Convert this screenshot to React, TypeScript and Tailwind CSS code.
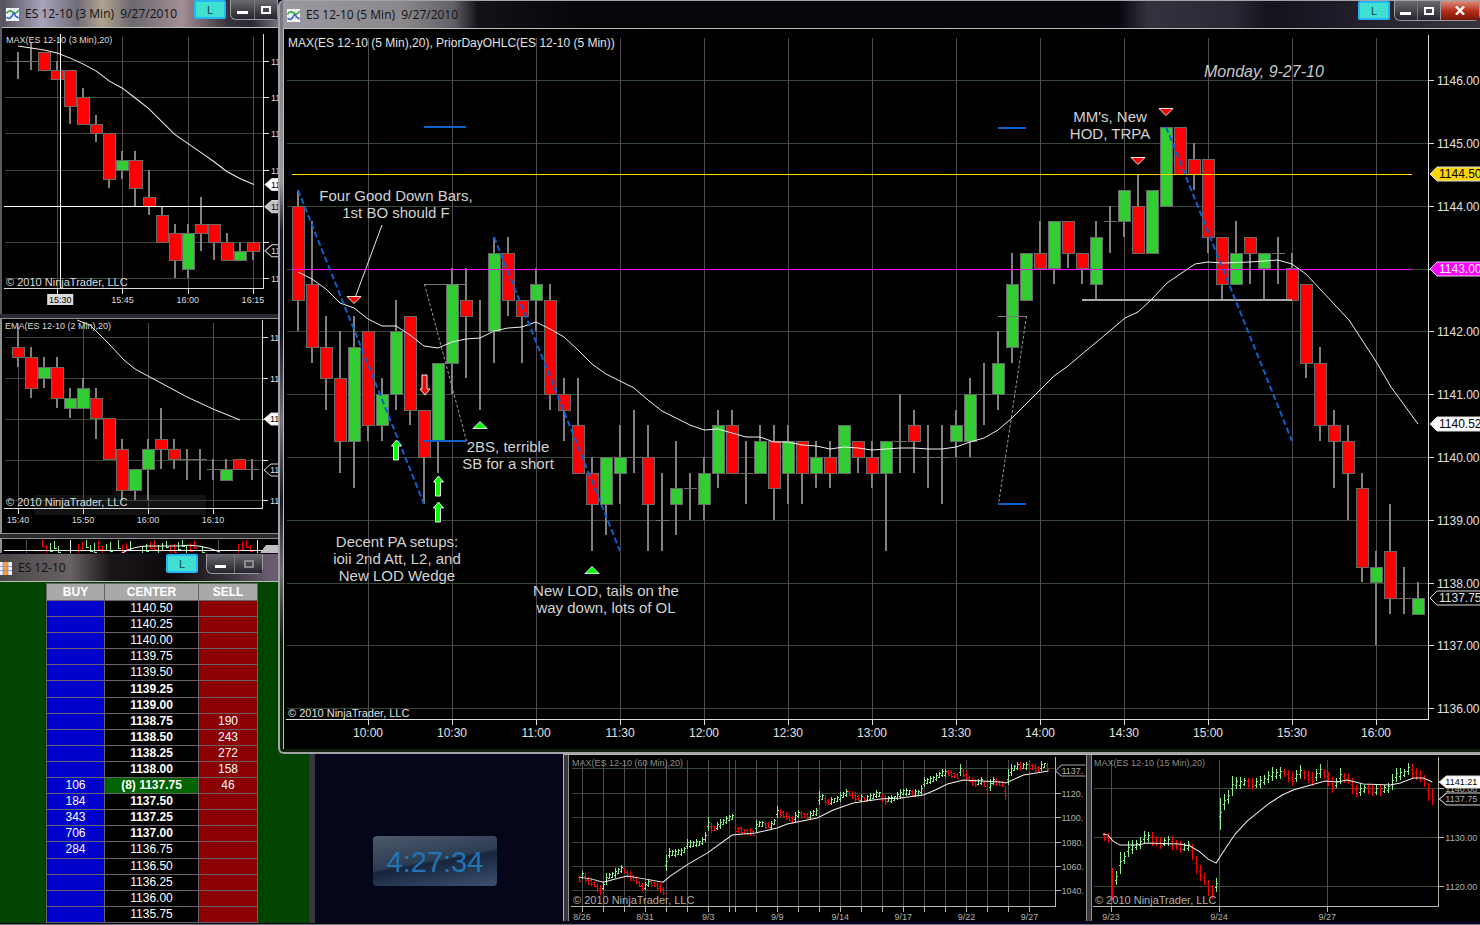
import type { ReactNode } from "react"

type Candle = [high: number, top: number, bottom: number, low: number, kind: "r" | "g" | "d"]
type Point = [number, number]

// 5 min bars in ticks above 1136.00
const FIVE_MIN: Candle[] = [
  [33, 32, 26, 24, "r"], [31, 27, 23, 22, "r"], [25, 23, 21, 19, "r"], [24, 21, 17, 15, "r"],
  [25, 23, 17, 14, "g"], [24, 24, 18, 17, "r"], [21, 20, 18, 17, "g"], [26, 24, 20, 19, "g"],
  [25, 25, 19, 18, "r"], [19, 19, 16, 13, "r"], [22, 22, 17, 15, "g"], [28, 27, 22, 20, "g"],
  [28, 26, 25, 21, "r"], [26, 24, 24, 19, "d"], [30, 29, 24, 22, "g"], [30, 29, 26, 25, "r"],
  [26, 26, 25, 22, "r"], [28, 27, 26, 24, "g"], [27, 26, 20, 19, "r"], [21, 20, 19, 17, "r"],
  [21, 18, 15, 15, "r"], [16, 15, 13, 10, "r"], [16, 16, 13, 11, "g"], [18, 16, 15, 13, "g"],
  [19, 16, 16, 15, "d"], [18, 16, 13, 10, "r"], [15, 12, 12, 10, "d"], [17, 14, 13, 11, "g"],
  [15, 14, 14, 12, "d"], [16, 15, 13, 12, "g"], [19, 18, 15, 14, "g"], [19, 18, 15, 15, "r"],
  [17, 15, 15, 13, "d"], [18, 17, 15, 15, "g"], [18, 17, 14, 12, "r"], [18, 17, 15, 13, "g"],
  [17, 17, 15, 13, "r"], [17, 16, 15, 14, "g"], [17, 16, 15, 14, "r"], [18, 18, 15, 15, "g"],
  [17, 17, 16, 15, "r"], [17, 16, 15, 14, "r"], [17, 17, 15, 10, "g"], [20, 17, 17, 15, "d"],
  [19, 18, 17, 15, "r"], [18, 16, 16, 14, "d"], [18, 16, 16, 13, "d"], [19, 18, 17, 16, "g"],
  [21, 20, 17, 16, "g"], [22, 20, 20, 18, "d"], [24, 22, 20, 19, "g"], [29, 27, 23, 22, "g"],
  [29, 29, 26, 26, "g"], [31, 29, 28, 28, "r"], [31, 31, 28, 27, "g"], [31, 31, 29, 28, "r"],
  [29, 29, 28, 27, "r"], [31, 30, 27, 26, "g"], [32, 31, 31, 29, "d"], [33, 33, 31, 30, "g"],
  [34, 32, 29, 29, "r"], [33, 33, 29, 29, "g"], [37, 37, 32, 32, "g"], [37, 37, 34, 34, "r"],
  [36, 35, 34, 33, "r"], [35, 35, 30, 29, "r"], [30, 30, 27, 26, "r"], [31, 29, 27, 27, "g"],
  [30, 30, 29, 27, "r"], [29, 29, 28, 26, "g"], [30, 29, 29, 27, "d"], [29, 28, 26, 26, "r"],
  [27, 27, 22, 21, "r"], [23, 22, 18, 17, "r"], [19, 18, 17, 14, "r"], [18, 17, 15, 12, "r"],
  [15, 14, 9, 8, "r"], [10, 9, 8, 4, "g"], [13, 10, 7, 6, "r"], [9, 7, 7, 6, "d"],
  [8, 7, 6, 6, "g"],
]

// 3 min bars in ticks above 1137.00
const THREE_MIN: Candle[] = [
  [25, 24, 24, 22, "d"], [26, 24, 24, 23, "d"], [25, 25, 23, 23, "r"], [24, 23, 22, 22, "r"],
  [23, 23, 19, 17, "r"], [21, 20, 17, 17, "r"], [18, 17, 16, 15, "r"], [16, 16, 11, 10, "r"],
  [14, 13, 12, 11, "g"], [14, 13, 10, 8, "r"], [12, 9, 8, 7, "r"], [8, 7, 4, 4, "r"],
  [6, 5, 2, 0, "r"], [6, 5, 1, 0, "g"], [9, 6, 5, 3, "r"], [6, 6, 4, 2, "r"],
  [5, 4, 2, 2, "r"], [4, 3, 2, 2, "g"], [4, 4, 3, 2, "r"],
]

// 2 min bars in ticks above 1137.00
const TWO_MIN: Candle[] = [
  [17, 15, 14, 13, "r"], [15, 14, 11, 10, "r"], [14, 13, 12, 11, "g"], [14, 13, 10, 9, "r"],
  [11, 10, 9, 8, "g"], [12, 11, 9, 9, "g"], [11, 10, 8, 6, "r"], [8, 8, 4, 4, "r"],
  [6, 5, 1, 0, "r"], [3, 3, 1, 0, "g"], [6, 5, 3, 0, "g"], [9, 6, 5, 3, "r"],
  [6, 5, 4, 3, "r"], [5, 4, 4, 2, "d"], [5, 4, 4, 2, "d"], [4, 3, 3, 2, "d"],
  [4, 3, 2, 2, "g"], [4, 4, 3, 3, "r"], [4, 3, 3, 2, "d"],
]

const HOURLY: Point[] = [
  [579, 880], [582, 876], [588, 882], [593, 883], [599, 892], [603, 887], [607, 877], [613, 876],
  [622, 869], [627, 875], [635, 880], [643, 889], [648, 884], [655, 885], [663, 892], [666, 864],
  [668, 854], [683, 853], [687, 845], [700, 844], [706, 837], [708, 825], [712, 830], [727, 820],
  [732, 818], [735, 830], [753, 834], [757, 825], [773, 826], [777, 813], [787, 817], [792, 821],
  [798, 815], [807, 817], [817, 812], [819, 799], [823, 798], [827, 803], [837, 800], [847, 793],
  [853, 797], [863, 800], [873, 797], [878, 793], [883, 801], [892, 800], [903, 793], [920, 794],
  [924, 783], [935, 779], [943, 773], [957, 777], [960, 771], [967, 778], [973, 784], [983, 782],
  [987, 792], [992, 782], [1002, 785], [1005, 794], [1009, 772], [1017, 767], [1028, 767],
  [1038, 770], [1043, 765], [1048, 769],
]

const QUARTER: Point[] = [
  [1104, 838], [1108, 839], [1112, 885], [1116, 879], [1120, 864], [1124, 859], [1128, 850],
  [1134, 847], [1140, 844], [1144, 838], [1148, 838], [1160, 844], [1168, 842], [1180, 848],
  [1190, 847], [1196, 866], [1200, 874], [1204, 880], [1207, 888], [1212, 893], [1216, 886],
  [1220, 815], [1224, 803], [1228, 798], [1232, 787], [1236, 784], [1244, 783], [1252, 785],
  [1256, 784], [1264, 781], [1272, 775], [1284, 774], [1292, 780], [1300, 773], [1308, 778],
  [1312, 780], [1320, 772], [1327, 778], [1331, 786], [1336, 784], [1340, 777], [1348, 780],
  [1355, 792], [1364, 790], [1380, 791], [1388, 789], [1396, 776], [1404, 774], [1409, 769],
  [1416, 775], [1423, 779], [1427, 792], [1432, 798],
]

const LADDER = [
  { price: "1140.50" }, { price: "1140.25" }, { price: "1140.00" }, { price: "1139.75" },
  { price: "1139.50" },
  { price: "1139.25", bold: true }, { price: "1139.00", bold: true },
  { price: "1138.75", bold: true, sell: "190" }, { price: "1138.50", bold: true, sell: "243" },
  { price: "1138.25", bold: true, sell: "272" }, { price: "1138.00", bold: true, sell: "158" },
  { price: "(8) 1137.75", bold: true, last: true, buy: "106", sell: "46" },
  { price: "1137.50", bold: true, buy: "184" }, { price: "1137.25", bold: true, buy: "343" },
  { price: "1137.00", bold: true, buy: "706" }, { price: "1136.75", buy: "284" },
  { price: "1136.50" }, { price: "1136.25" }, { price: "1136.00" }, { price: "1135.75" },
] as { price: string; bold?: boolean; last?: boolean; buy?: string; sell?: string }[]

function Grid({ xs, ys, x1, x2, y1, y2 }: { xs: number[]; ys: number[]; x1: number; x2: number; y1: number; y2: number }) {
  return (
    <g shapeRendering="crispEdges">
      {ys.map((y) => <line key={y} x1={x1} x2={x2} y1={y + 0.5} y2={y + 0.5} stroke="#374837" />)}
      {xs.map((x) => <line key={x} x1={x + 0.5} x2={x + 0.5} y1={y1} y2={y2} stroke="#524852" />)}
    </g>
  )
}

function Axes({ xs, ys, left, right, top, bottom, tick = 6, color = "#dcdcdc" }: { xs: number[]; ys: number[]; left: number; right: number; top: number; bottom: number; tick?: number; color?: string }) {
  return (
    <g shapeRendering="crispEdges" stroke={color}>
      <line x1={left} x2={right + 1} y1={bottom + 0.5} y2={bottom + 0.5} />
      <line x1={right + 0.5} x2={right + 0.5} y1={top} y2={bottom} />
      {ys.map((y) => <line key={y} x1={right} x2={right + tick} y1={y + 0.5} y2={y + 0.5} />)}
      {xs.map((x) => <line key={x} x1={x + 0.5} x2={x + 0.5} y1={bottom} y2={bottom + tick} />)}
    </g>
  )
}

function Candles({ data, x0, step, base, tick }: { data: Candle[]; x0: number; step: number; base: number; tick: number }) {
  const y = (t: number) => Math.round(base - t * tick)
  return (
    <g shapeRendering="crispEdges">
      {data.map(([high, top, bottom, low, kind], i) => {
        const x = x0 + i * step
        return (
          <g key={i}>
            <rect x={x - 1} y={y(high)} width={2} height={y(low) - y(high)} fill="#808080" />
            {kind === "d" ? (
              <line x1={x - 6} x2={x + 7} y1={y(top) + 0.5} y2={y(top) + 0.5} stroke="#6e6e6e" />
            ) : (
              <rect x={x - 5.5} y={y(top) + 0.5} width={12} height={y(bottom) - y(top)} fill={kind === "r" ? "#ff0000" : "#32cd32"} stroke="#696969" />
            )}
          </g>
        )
      })}
    </g>
  )
}

// open/high/low/close sticks walked along a price path
function Sticks({ path, step, size }: { path: Point[]; step: number; size: number }) {
  const start = path[0][0]
  const count = Math.floor((path[path.length - 1][0] - start) / step) + 1
  const at = (x: number) => {
    const i = Math.max(1, path.findIndex((p) => p[0] >= x))
    const [ax, ay] = path[i - 1]
    const [bx, by] = path[i]
    return ay + ((by - ay) * (x - ax)) / (bx - ax)
  }
  return (
    <g shapeRendering="crispEdges">
      {Array.from({ length: count }, (_, i) => {
        const x = start + i * step
        const mid = Math.round(at(x))
        const move = i ? mid - Math.round(at(x - step)) : 0
        const up = move < 0 || (move === 0 && i % 3 !== 0)
        const half = Math.min(size * 2, Math.round(size / 2 + ((i * 7) % 5) / 2 + Math.abs(move) / 3))
        const open = up ? mid + 2 : mid - 2
        const close = up ? mid - 2 : mid + 2
        return (
          <path key={i} d={`M${x + 0.5} ${mid - half}V${mid + half}M${x - 1} ${open + 0.5}h2M${x} ${close + 0.5}h2`} stroke={up ? "#90ee90" : "#ff0000"} fill="none" />
        )
      })}
    </g>
  )
}

function Average({ points, color = "#f0f0f0" }: { points: string; color?: string }) {
  return <polyline points={points} fill="none" stroke={color} />
}

function PriceTag({ x, y, label, fill = "#000", stroke = "#dcdcdc", color = "#000", size = 12 }: { x: number; y: number; label: string; fill?: string; stroke?: string; color?: string; size?: number }) {
  const h = size > 10 ? 7 : 6
  return (
    <g>
      <path d={`M${x} ${y}l7 ${-h}h60v${h * 2}h-60z`} fill={fill} stroke={stroke} />
      <text x={x + (size > 10 ? 9 : 6)} y={y + Math.round(size / 3)} fontSize={size} fill={color}>{label}</text>
    </g>
  )
}

function Note({ x, y, lines }: { x: number; y: number; lines: string[] }) {
  return (
    <text fontSize={15} fill="#d3d3d3" textAnchor="middle">
      {lines.map((line, i) => <tspan key={line} x={x} y={y + i * 17}>{line}</tspan>)}
    </text>
  )
}

function Arrow({ x, y, down }: { x: number; y: number; down?: boolean }) {
  const d = down
    ? `M${x - 2} ${y}h5v14h3l-5 6l-5 -6h2z`
    : `M${x + 0.5} ${y}l5 6h-3v14h-5v-14h-2z`
  return <path d={d} fill={down ? "#ff0000" : "#00ff00"} stroke="#f0f0f0" />
}

function Marker({ x, y, down }: { x: number; y: number; down?: boolean }) {
  return down ? (
    <path d={`M${x - 7} ${y - 3.5}h14l-7 7z`} fill="#ff0000" stroke="#e8e8e8" />
  ) : (
    <path d={`M${x - 7} ${y + 3.5}h14l-7 -7z`} fill="#00ff00" stroke="#e8e8e8" />
  )
}

function ChartIcon() {
  return (
    <svg viewBox="0 0 13 13" className="size-[13px] shrink-0">
      <rect width="13" height="13" fill="#f4f6f8" />
      <path d="M0 4.5h13M0 8.5h13M4.5 0v13M8.5 0v13" stroke="#cfd8dc" strokeWidth="0.6" />
      <path d="M0.5 5.5q2-3.5 4.5-2.5t3.5 2.5q2 0 4-3.5" stroke="#2e9e3a" strokeWidth="1.5" fill="none" />
      <path d="M0.5 9.5l2.5 1q3-1 4.5-5.5M8 5.5l2 3 2.500 1.500" stroke="#2d62c8" strokeWidth="1.5" fill="none" />
    </svg>
  )
}

function LadderIcon() {
  return (
    <svg viewBox="0 0 12 13" className="h-[13px] w-3 shrink-0">
      <rect width="12" height="13" fill="#eef" />
      <rect x="3" width="5" height="13" fill="#f7a032" />
      <path d="M0 4.5h12M0 8.5h12M3 0v13M8 0v13" stroke="#8a8fb0" strokeWidth="0.8" />
    </svg>
  )
}

function LinkButton() {
  return (
    <button className="h-[19px] w-8 shrink-0 rounded-xs border-2 border-[#25b4f4] bg-[#40e0d0] text-center text-[11px] leading-3 text-[#10404c]">
      L
    </button>
  )
}

function WindowButtons({ close, dim }: { close?: boolean; dim?: boolean }) {
  return (
    <div className="flex h-5 shrink-0 rounded-b-md border border-t-0 border-[#9a9aa2]">
      <button aria-label="Minimize" className="flex w-7 items-end justify-center rounded-bl-md border-r border-[#77777f] bg-linear-to-b from-[#6a6a70] to-[#25252b] pb-[5px]">
        <span className="h-[3px] w-[11px] bg-white" />
      </button>
      <button aria-label="Maximize" className="flex w-[27px] items-center justify-center bg-linear-to-b from-[#6a6a70] to-[#25252b]">
        <span className={dim ? "h-2 w-[10px] border-2 border-[#8c8c8c]" : "h-2 w-[10px] border-2 border-white"} />
      </button>
      {close && (
        <button aria-label="Close" className="flex w-12 items-center justify-center border-l border-[#9a9aa2] bg-linear-to-b from-[#d88a7c] via-[#b8301c] to-[#7a1408] text-white">
          <svg viewBox="0 0 10 9" className="h-[9px] w-[10px]">
            <path d="M1 0.5l8 8M9 0.5l-8 8" stroke="#fff" strokeWidth="2.4" />
          </svg>
        </button>
      )}
    </div>
  )
}

function Chart({ box, label, className, children }: { box: string; label: string; className?: string; children: ReactNode }) {
  return (
    <svg viewBox={box} role="img" aria-label={label} preserveAspectRatio="xMinYMin meet" fontFamily="'Liberation Sans', Arial, sans-serif" className={`block w-full bg-black ${className ?? ""}`}>
      {children}
    </svg>
  )
}

function FiveMinuteChart() {
  const xs = Array.from({ length: 13 }, (_, i) => 368 + i * 84)
  const ys = [80, 143, 206, 269, 331, 394, 457, 520, 583, 645, 708]
  const times = ["10:00", "10:30", "11:00", "11:30", "12:00", "12:30", "13:00", "13:30", "14:00", "14:30", "15:00", "15:30", "16:00"]
  return (
    <Chart box="284 29 1196 720" label="ES 12-10 5 minute chart">
      <Grid xs={xs} ys={ys} x1={287} x2={1428} y1={38} y2={719} />
      <Axes xs={xs} ys={ys} left={286} right={1428} top={35} bottom={719} />
      <Candles data={FIVE_MIN} x0={298} step={14} base={708} tick={15.7} />
      <g shapeRendering="crispEdges">
        <line x1={292} x2={1412} y1={174.5} y2={174.5} stroke="#ffd700" />
        <line x1={292} x2={1412} y1={269.5} y2={269.5} stroke="#ff00ff" />
        <line x1={1082} x2={1292} y1={300} y2={300} stroke="#a9a9a9" strokeWidth={2} />
      </g>
      <Average points="298,272 312,279 326,289 340,303 354,308 368,319 382,326 396,326 410,335 424,346 438,348 452,342 466,339 480,338 494,331 508,328 522,327 536,322 550,329 564,337 578,350 592,364 606,374 620,381 634,388 648,400 662,411 676,418 690,425 704,430 718,429 732,433 746,437 760,437 774,442 788,442 802,445 816,446 830,449 844,447 858,448 872,450 886,449 900,448 914,448 928,449 942,449 956,447 970,442 984,438 998,430 1012,418 1026,404 1040,390 1054,376 1068,366 1082,354 1099,340 1125,318 1138,312 1152,299 1167,283 1195,264 1208,262 1223,263 1250,262 1278,260 1292,264 1306,274 1349,320 1377,363 1391,387 1418,424" />
      <g stroke="#0a60cd" strokeWidth={2} fill="none">
        <path d="M298 190L424 504M494 237L620 551M1166 127L1292 441" strokeDasharray="6 3" />
        <path d="M424 127h42M424 441h42M998 128h28M998 504h28" />
      </g>
      <g stroke="#9a9a9a" fill="none">
        <path d="M424 284.5h42M998 316.5h28" stroke="#777" />
        <path d="M424.5 284L466.5 441M1026.5 316L998.5 504" strokeDasharray="3 2" />
        <path d="M382 225L355 298" stroke="#e8e8e8" />
      </g>
      <Marker x={354} y={300} down />
      <Marker x={1138} y={161} down />
      <Marker x={1166} y={112} down />
      <Marker x={480} y={425} />
      <Marker x={592} y={570} />
      <Arrow x={396} y={440} />
      <Arrow x={438} y={476} />
      <Arrow x={438} y={502} />
      <Arrow x={424} y={375} down />
      <Note x={396} y={201} lines={["Four Good Down Bars,", "1st BO should F"]} />
      <Note x={508} y={452} lines={["2BS, terrible", "SB for a short"]} />
      <Note x={397} y={547} lines={["Decent PA setups:", "ioii 2nd Att, L2, and", "New LOD Wedge"]} />
      <Note x={606} y={596} lines={["New LOD, tails on the", "way down, lots of OL"]} />
      <Note x={1110} y={122} lines={["MM's, New", "HOD, TRPA"]} />
      <text x={1204} y={77} fontSize={16} fontStyle="italic" fill="#c8c8c8">Monday, 9-27-10</text>
      <g fontSize={12} fill="#e0e0e0">
        <text x={288} y={47}>MAX(ES 12-10 (5 Min),20), PriorDayOHLC(ES 12-10 (5 Min))</text>
        <text x={288} y={717} fontSize={11}>© 2010 NinjaTrader, LLC</text>
        {times.map((t, i) => <text key={t} x={xs[i]} y={737} textAnchor="middle">{t}</text>)}
        {ys.map((y, i) => <text key={y} x={1437} y={y + 5}>{`${1146 - i}.00`}</text>)}
      </g>
      <PriceTag x={1430} y={174} label="1144.50" fill="#ffd700" />
      <PriceTag x={1430} y={269} label="1143.00" fill="#ff00ff" color="#fff" />
      <PriceTag x={1430} y={424} label="1140.52" fill="#fff" />
      <PriceTag x={1430} y={598} label="1137.75" color="#e0e0e0" />
    </Chart>
  )
}

function ThreeMinuteChart() {
  const xs = [58, 123, 188, 253]
  const ys = [62, 98, 134, 170, 242, 278]
  return (
    <Chart box="3 29 275 285" label="ES 12-10 3 minute chart">
      <Grid xs={xs} ys={ys} x1={6} x2={263} y1={38} y2={288} />
      <Axes xs={xs} ys={ys} left={5} right={263} top={35} bottom={288} />
      <Candles data={THREE_MIN} x0={19} step={13} base={278} tick={9} />
      <Average points="19,47 32,49 45,51 58,54 71,59 84,65 97,72 110,82 123,89 136,99 149,109 162,122 175,135 188,144 201,153 214,162 227,172 240,179 254,185" />
      <path d="M61.5 35V288M5 206.5H264" stroke="#fff" shapeRendering="crispEdges" />
      <g fontSize={9} fill="#dcdcdc">
        <text x={7} y={44}>MAX(ES 12-10 (3 Min),20)</text>
        <text x={7} y={286} fontSize={11}>© 2010 NinjaTrader, LLC</text>
        {ys.filter((y) => y !== 242).map((y) => <text key={y} x={271} y={y + 4}>11</text>)}
        <rect x={48} y={294} width={26} height={11} fill="#dcdcdc" />
        <text x={61} y={303} textAnchor="middle" fill="#000">15:30</text>
        <text x={123} y={303} textAnchor="middle">15:45</text>
        <text x={188} y={303} textAnchor="middle">16:00</text>
        <text x={253} y={303} textAnchor="middle">16:15</text>
      </g>
      <PriceTag x={265} y={185} label="11" fill="#fff" size={9} />
      <PriceTag x={265} y={207} label="11" fill="#c0c0c0" size={9} />
      <PriceTag x={265} y={251} label="11" color="#dcdcdc" size={9} />
    </Chart>
  )
}

function TwoMinuteChart() {
  const xs = [18, 83, 148, 213]
  const ys = [337, 378, 419, 460, 500]
  const times = ["15:40", "15:50", "16:00", "16:10"]
  return (
    <Chart box="2 319 276 214" label="ES 12-10 2 minute chart">
      <rect x={34} y={495} width={172} height={20} fill="#121212" />
      <Grid xs={xs} ys={ys} x1={5} x2={262} y1={323} y2={508} />
      <Axes xs={xs} ys={ys} left={4} right={262} top={320} bottom={508} />
      <Candles data={TWO_MIN} x0={18} step={13} base={500} tick={10.2} />
      <Average points="77,320 90,325 110,345 124,360 135,369 148,376 161,383 187,397 213,409 240,420" />
      <g fontSize={9} fill="#dcdcdc">
        <text x={5} y={329}>EMA(ES 12-10 (2 Min),20)</text>
        <text x={6} y={506} fontSize={11}>© 2010 NinjaTrader, LLC</text>
        {[337, 378, 500].map((y) => <text key={y} x={270} y={y + 4}>11</text>)}
        {times.map((t, i) => <text key={t} x={xs[i]} y={523} textAnchor="middle">{t}</text>)}
      </g>
      <PriceTag x={264} y={419} label="11" fill="#fff" size={9} />
      <PriceTag x={264} y={470} label="11" color="#dcdcdc" size={9} />
    </Chart>
  )
}

function VolumeStrip() {
  const bars = [42, 46, 50, 54, 58, 78, 82, 86, 90, 94, 98, 102, 106, 110, 118, 122, 126, 130, 142, 146, 150, 154, 158, 162, 166, 170, 174, 178, 182, 186, 190, 194, 202, 238, 242, 246, 250]
  return (
    <Chart box="2 539 276 14" label="ES 12-10 overview">
      <g shapeRendering="crispEdges">
        {bars.map((x, i) => (
          <path key={x} d={`M${x + 0.5} ${540 + ((i * 5) % 7)}v${6 + ((i * 3) % 4)}h2`} fill="none" stroke={i % 5 < 2 || i > 32 ? "#ff0000" : "#90ee90"} />
        ))}
        <path d="M26.5 540v13M218.5 540v13" stroke="#555" />
        <path d="M70.5 540v13M257.5 540v13M4 550.5h268" stroke="#f0f0f0" />
      </g>
      <path d="M122 553q12 -7 26 -7h30q20 -3 42 6" fill="none" stroke="#fff" />
      <path d="M260 553l6 -8h14v8z" fill="#c0c0c0" />
    </Chart>
  )
}

function HourChart() {
  const xs = [582, 603, 624, 645, 666, 687, 708, 729, 735, 756, 777, 798, 819, 840, 861, 882, 903, 924, 945, 966, 987, 1008, 1029]
  const ys = [769, 794, 818, 843, 867, 891]
  const dates: [number, string][] = [[582, "8/26"], [645, "8/31"], [708, "9/3"], [777, "9/9"], [840, "9/14"], [903, "9/17"], [966, "9/22"], [1029, "9/27"]]
  return (
    <Chart box="569 756 516 166" label="ES 12-10 60 minute chart">
      <Grid xs={xs} ys={ys} x1={572} x2={1054} y1={761} y2={907} />
      <Axes xs={xs} ys={ys.slice(1)} left={571} right={1054} top={758} bottom={907} color="#b4b8a8" />
      <Sticks path={HOURLY} step={3} size={4} />
      <Average points="579,878 592,880 603,883 627,877 640,879 663,883 670,877 688,865 707,854 732,836 755,834 777,829 787,825 817,819 833,811 853,804 880,800 900,799 923,796 935,791 947,785 963,781 1000,783 1005,784 1023,776 1048,772" />
      <g fontSize={9} fill="#b0b0a8">
        <text x={572} y={767} fill="#8c8c88">MAX(ES 12-10 (60 Min),20)</text>
        <text x={573} y={905} fontSize={11}>© 2010 NinjaTrader, LLC</text>
        {dates.map(([x, d]) => <text key={d} x={x} y={921} textAnchor="middle">{d}</text>)}
        {["1120.", "1100.", "1080.", "1060.", "1040."].map((p, i) => <text key={p} x={1061} y={ys[i + 1] + 4}>{p}</text>)}
      </g>
      <path d="M1055 772l6 -6h24M1055 772l6 5h24" fill="none" stroke="#a8a0a8" />
      <text x={1061} y={775} fontSize={9} fill="#b0b0a8">1137.</text>
    </Chart>
  )
}

function QuarterChart() {
  const xs = [1111, 1219, 1327]
  const ys = [789, 838, 887]
  return (
    <Chart box="1092 756 388 166" label="ES 12-10 15 minute chart">
      <Grid xs={xs} ys={ys} x1={1094} x2={1438} y1={761} y2={907} />
      <Axes xs={xs} ys={ys} left={1093} right={1438} top={758} bottom={907} color="#b4b8a8" />
      <Sticks path={QUARTER} step={4} size={8} />
      <Average points="1103,835 1108,836 1113,842 1120,846 1137,846 1147,844 1180,845 1190,847 1200,853 1208,860 1216,864 1223,853 1235,835 1247,822 1258,813 1268,805 1282,796 1293,791 1307,787 1325,782 1337,783 1347,781 1363,785 1390,786 1400,784 1413,779 1423,779 1432,783" />
      <g fontSize={9} fill="#b0b0a8">
        <text x={1094} y={767} fill="#8c8c88">MAX(ES 12-10 (15 Min),20)</text>
        <text x={1095} y={905} fontSize={11}>© 2010 NinjaTrader, LLC</text>
        <text x={1111} y={921} textAnchor="middle">9/23</text>
        <text x={1219} y={921} textAnchor="middle">9/24</text>
        <text x={1327} y={921} textAnchor="middle">9/27</text>
        <text x={1445} y={793}>1140.00</text>
        <text x={1445} y={842}>1130.00</text>
        <text x={1445} y={891}>1120.00</text>
      </g>
      <PriceTag x={1439} y={783} label="1141.21" fill="#fff" size={9} />
      <PriceTag x={1439} y={800} label="1137.75" color="#b0b0a8" size={9} />
    </Chart>
  )
}

function TitleBar({ icon, title, glow, children }: { icon: ReactNode; title: string; glow: string; children: ReactNode }) {
  return (
    <header className={`flex h-7 items-start border-b border-[#b8c0b8] ${glow}`}>
      <h2 className="flex flex-1 items-center gap-1.5 pt-1.5 font-['Open_Sans'] text-xs leading-4 whitespace-pre text-[#111]">
        {icon}
        {title}
      </h2>
      <div className="flex items-start gap-1">{children}</div>
    </header>
  )
}

function PriceLadder() {
  return (
    <div className="flex-1 bg-[#004400] pt-px pl-[46px]">
      <table className="h-[340px] w-[212px] table-fixed border-collapse text-center text-xs leading-[15px] text-white">
        <thead>
          <tr className="h-[17px] bg-[#a9a9a9]">
            <th className="w-[58px] border border-[#6b5f6b] p-0">BUY</th>
            <th className="w-[94px] border border-[#6b5f6b] p-0">CENTER</th>
            <th className="border border-[#6b5f6b] p-0">SELL</th>
          </tr>
        </thead>
        <tbody>
          {LADDER.map((row) => (
            <tr key={row.price}>
              <td className="border border-[#6b5f6b] bg-[#0000cd] p-0">{row.buy}</td>
              <td className={`border border-[#6b5f6b] p-0 ${row.last ? "bg-[#006400]" : "bg-black"} ${row.bold ? "font-bold" : ""}`}>{row.price}</td>
              <td className="border border-[#6b5f6b] bg-[#8b0000] p-0">{row.sell}</td>
            </tr>
          ))}
        </tbody>
      </table>
    </div>
  )
}

export default function App() {
  return (
    <main className="relative min-h-screen w-full overflow-hidden border-b border-[#777] bg-[#06061a] font-['Liberation_Sans',Arial,sans-serif]">
      {/* order ladder, partly under the 5 min window */}
      <section className="absolute top-[554px] left-0 flex w-[315px] flex-col border-r-6 border-[#3a3640] bg-[#2a262c]">
        <TitleBar
          icon={<LadderIcon />}
          title="ES 12-10"
          glow="bg-[linear-gradient(90deg,#4a4648_0,#6a6264_70px,#1a161a_110px,#0c080c_170px,#3a343c_230px,#6a5c70_270px)]"
        >
          <LinkButton />
          <div className="pr-[46px] pl-1"><WindowButtons dim /></div>
        </TitleBar>
        <PriceLadder />
      </section>

      {/* stacked small charts */}
      <section className="absolute top-0 left-0 flex w-[278px] flex-col bg-[#2c2a30]">
        <div className="border-l-2 border-[#5c5860]">
          <TitleBar
            icon={<span className="pl-1"><ChartIcon /></span>}
            title="ES 12-10 (3 Min)  9/27/2010"
            glow="bg-[linear-gradient(90deg,#55525c_0,#a8a4bc_40px,#706c78_75px,#b0a490_100px,#6c6870_130px,#a48e94_180px,#38343e_225px,#2a2733_250px,#77707c_276px)]"
          >
            <LinkButton />
            <div className="w-12 overflow-hidden"><WindowButtons /></div>
          </TitleBar>
          <ThreeMinuteChart />
        </div>
        <div className="mt-1 border-y border-l-2 border-[#8c9088]"><TwoMinuteChart /></div>
        <div className="mt-1 border-t border-l-2 border-[#8c9088]"><VolumeStrip /></div>
      </section>

      {/* 5 min window */}
      <section className="absolute top-0 right-0 left-[278px] z-10 rounded-l-md border-t border-b-2 border-l-2 border-[#a4a4a8] bg-[linear-gradient(#77737c,#9a98a0_180px,#1c1a26_230px,#141220_330px,#77737c_420px,#1a1822_500px,#706a76_570px,#0c200c_640px)] pb-[3px] pl-[3px]">
        <TitleBar
          icon={<span className="pl-1"><ChartIcon /></span>}
          title="ES 12-10 (5 Min)  9/27/2010"
          glow="bg-[linear-gradient(90deg,#9c98a0_0,#8a888c_120px,#636168_170px,#141218_195px,#05050a_300px,#08060c_835px,#34323e_865px,#2a2834_950px,#14121c_985px,#1c1926_1040px,#38343f_1196px)]"
        >
          <LinkButton />
          <div className="w-[86px] overflow-hidden"><WindowButtons close /></div>
        </TitleBar>
        <div className="border-l border-[#b8c0b8]"><FiveMinuteChart /></div>
      </section>

      {/* desktop clock */}
      <time className="absolute top-[836px] left-[373px] h-[50px] w-[124px] rounded-sm bg-[linear-gradient(170deg,#4c5a6c_0,#2c3c52_48%,#16243c_52%,#3c5270_100%)] pt-2 text-center text-[29px] leading-9 text-[#2274b4]">
        4:27:34
      </time>

      {/* long range charts along the bottom */}
      <section className="absolute top-[754px] right-0 left-[563px] flex border-t border-l border-[#b4b8b0] bg-[#3a363e] pl-1">
        <div className="flex-[516_1_0%] border-x border-[#8c9088]"><HourChart /></div>
        <div className="ml-1 flex-[388_1_0%] border-l border-[#8c9088]"><QuarterChart /></div>
      </section>
    </main>
  )
}
